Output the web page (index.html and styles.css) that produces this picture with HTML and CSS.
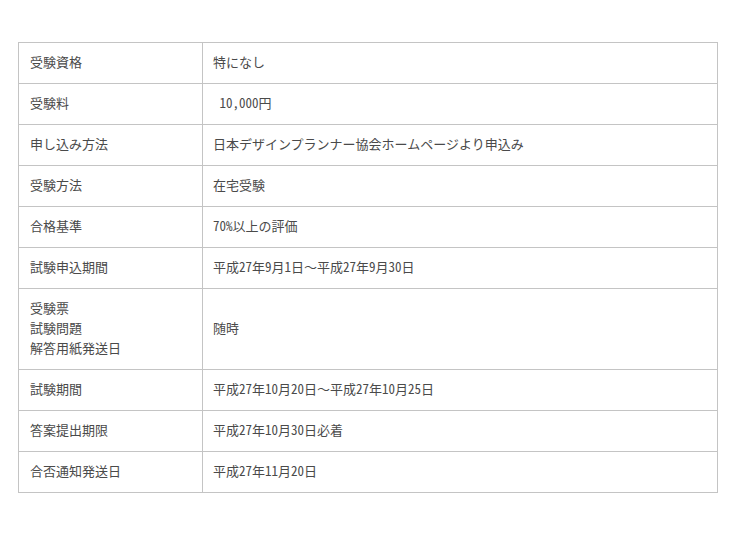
FILE: index.html
```html
<!DOCTYPE html>
<html lang="ja">
<head>
<meta charset="utf-8">
<link rel="stylesheet" href="styles.css">
</head>
<body>
<table class="info">
<tr><th>受験資格</th><td>特になし</td></tr>
<tr><th>受験料</th><td>&nbsp;10,000円</td></tr>
<tr><th>申し込み方法</th><td>日本デザインプランナー協会ホームページより申込み</td></tr>
<tr><th>受験方法</th><td>在宅受験</td></tr>
<tr><th>合格基準</th><td>70%以上の評価</td></tr>
<tr><th>試験申込期間</th><td>平成27年9月1日<span class="wide">～</span>平成27年9月30日</td></tr>
<tr><th>受験票<br>試験問題<br>解答用紙発送日</th><td>随時</td></tr>
<tr><th>試験期間</th><td>平成27年10月20日<span class="wide">～</span>平成27年10月25日</td></tr>
<tr><th>答案提出期限</th><td>平成27年10月30日必着</td></tr>
<tr><th>合否通知発送日</th><td>平成27年11月20日</td></tr>
</table>
</body>
</html>
```
FILE: styles.css
```css
body {
  margin: 0;
  padding: 42px 0 0 18px;
  background: #fff;
}
.info {
  border-collapse: collapse;
  width: 700px;
  font-family: "Noto Sans CJK JP", sans-serif;
  font-feature-settings: "hwid";
  font-size: 13px;
  line-height: 20px;
  color: #4a4a4a;
}
.info th,
.info td {
  border: 1px solid #c4c4c4;
  padding: 9px 10px 11px 11px;
  text-align: left;
  font-weight: normal;
  vertical-align: middle;
}
.info th {
  width: 162px;
}
.info td {
  padding-left: 10px;
}
.wide {
  font-feature-settings: normal;
}
```
